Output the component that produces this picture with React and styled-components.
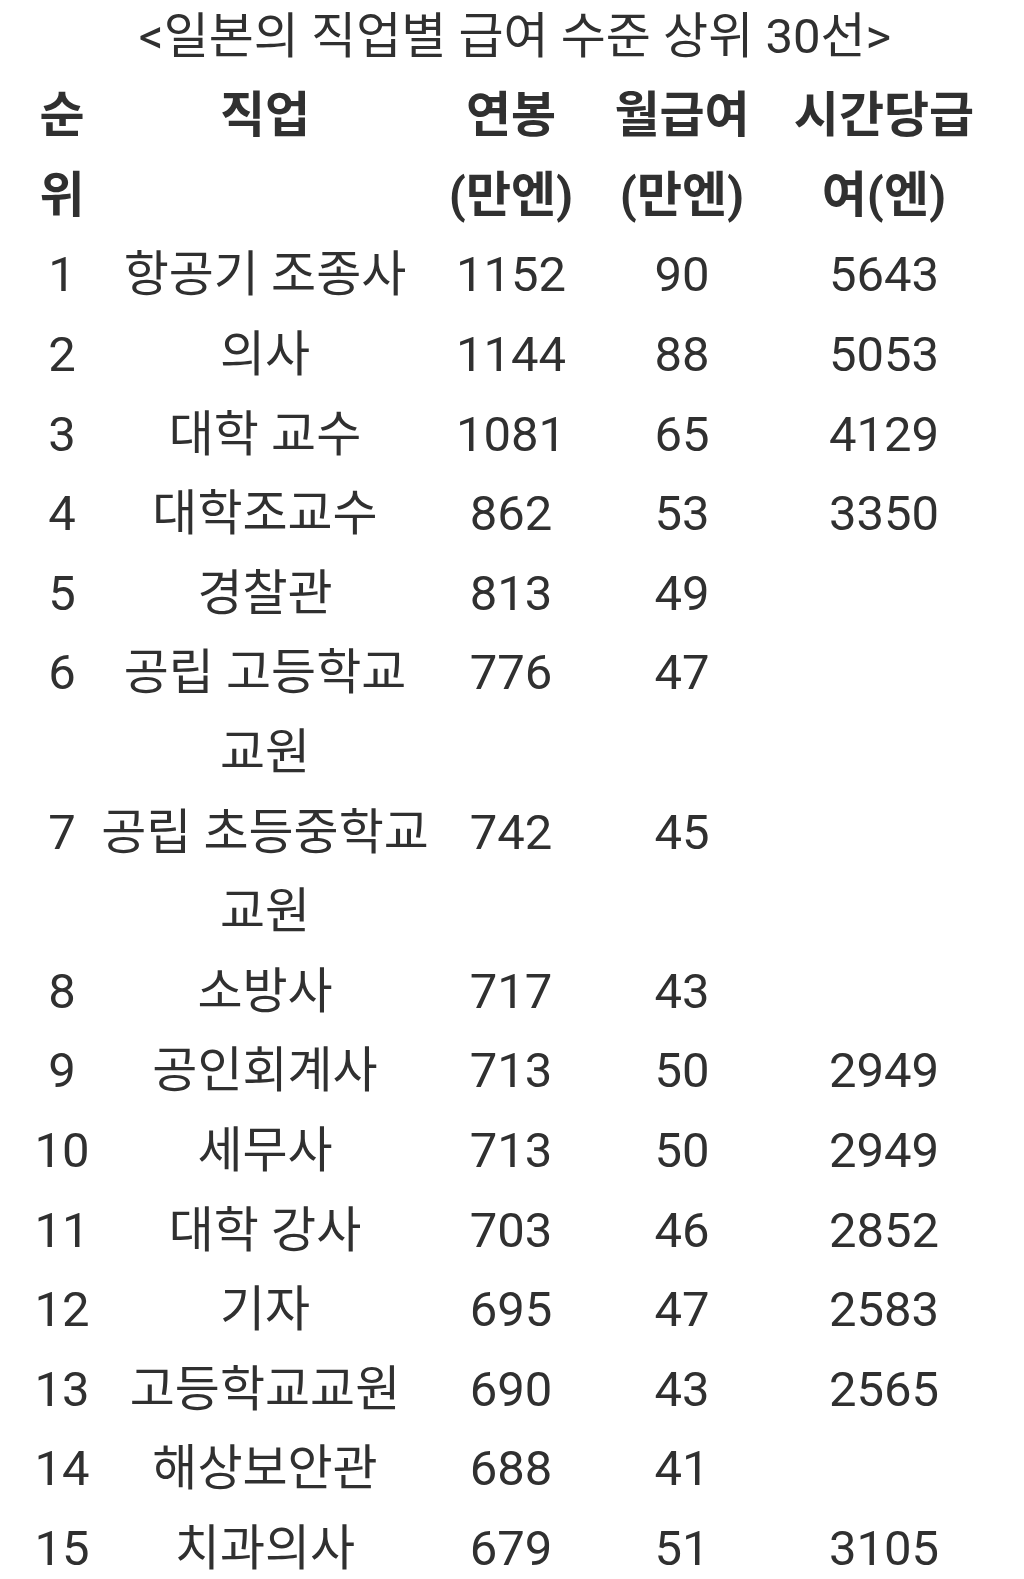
import React from "react";
import styled, { createGlobalStyle } from "styled-components";

const GlobalStyle = createGlobalStyle`
  html, body {
    margin: 0;
    padding: 0;
    background: #ffffff;
  }
  body {
    font-family: "Roboto", "Noto Sans CJK KR", sans-serif;
    color: #303030;
  }
`;

const Page = styled.div`
  width: 1024px;
  min-height: 1579px;
  background: #ffffff;
  overflow: hidden;
`;

const Title = styled.div`
  height: 74px;
  line-height: 74px;
  font-size: 49px;
  text-align: center;
  white-space: nowrap;
  padding-left: 6px;
`;

const Table = styled.div`
  display: grid;
  grid-template-columns: 124px 282px 210px 132px 272px;
  grid-auto-rows: 79.6px;
  font-size: 49px;
`;

const Cell = styled.div`
  display: flex;
  justify-content: center;
  align-items: center;
  padding-top: 4px;
  line-height: 75px;
  white-space: nowrap;
  font-weight: ${(p) => (p.$head ? 700 : 400)};
`;

const headRows = [
  ["순", "직업", "연봉", "월급여", "시간당급"],
  ["위", "", "(만엔)", "(만엔)", "여(엔)"],
];

const rows = [
  ["1", ["항공기 조종사"], "1152", "90", "5643"],
  ["2", ["의사"], "1144", "88", "5053"],
  ["3", ["대학 교수"], "1081", "65", "4129"],
  ["4", ["대학조교수"], "862", "53", "3350"],
  ["5", ["경찰관"], "813", "49", ""],
  ["6", ["공립 고등학교", "교원"], "776", "47", ""],
  ["7", ["공립 초등중학교", "교원"], "742", "45", ""],
  ["8", ["소방사"], "717", "43", ""],
  ["9", ["공인회계사"], "713", "50", "2949"],
  ["10", ["세무사"], "713", "50", "2949"],
  ["11", ["대학 강사"], "703", "46", "2852"],
  ["12", ["기자"], "695", "47", "2583"],
  ["13", ["고등학교교원"], "690", "43", "2565"],
  ["14", ["해상보안관"], "688", "41", ""],
  ["15", ["치과의사"], "679", "51", "3105"],
];

export default function App() {
  return (
    <>
      <GlobalStyle />
      <Page>
        <Title>&lt;일본의 직업별 급여 수준 상위 30선&gt;</Title>
        <Table>
          {headRows.map((r, i) =>
            r.map((t, j) => (
              <Cell key={`h${i}-${j}`} $head>
                {t}
              </Cell>
            ))
          )}
          {rows.map(([rank, job, year, month, hour]) =>
            job.map((line, k) => (
              <React.Fragment key={`${rank}-${k}`}>
                <Cell>{k === 0 ? rank : ""}</Cell>
                <Cell>{line}</Cell>
                <Cell>{k === 0 ? year : ""}</Cell>
                <Cell>{k === 0 ? month : ""}</Cell>
                <Cell>{k === 0 ? hour : ""}</Cell>
              </React.Fragment>
            ))
          )}
        </Table>
      </Page>
    </>
  );
}
